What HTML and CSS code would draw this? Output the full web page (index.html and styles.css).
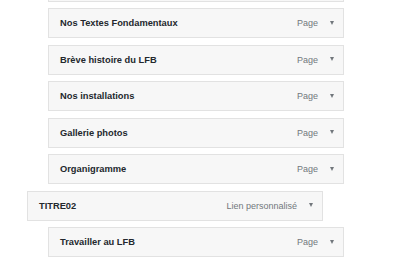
FILE: index.html
```html
<!DOCTYPE html>
<html lang="fr">
<head>
<meta charset="utf-8">
<title>Menu</title>
<link rel="stylesheet" href="styles.css">
</head>
<body>
<ul class="menu">
  <li class="item depth-1"><div class="bar"></div></li>
  <li class="item depth-1"><div class="bar"><span class="title">Nos Textes Fondamentaux</span><span class="meta"><span class="type">Page</span><span class="arrow"></span></span></div></li>
  <li class="item depth-1"><div class="bar"><span class="title">Brève histoire du LFB</span><span class="meta"><span class="type">Page</span><span class="arrow"></span></span></div></li>
  <li class="item depth-1"><div class="bar"><span class="title">Nos installations</span><span class="meta"><span class="type">Page</span><span class="arrow"></span></span></div></li>
  <li class="item depth-1"><div class="bar"><span class="title">Gallerie photos</span><span class="meta"><span class="type">Page</span><span class="arrow"></span></span></div></li>
  <li class="item depth-1"><div class="bar"><span class="title">Organigramme</span><span class="meta"><span class="type">Page</span><span class="arrow"></span></span></div></li>
  <li class="item depth-0"><div class="bar"><span class="title">TITRE02</span><span class="meta"><span class="type">Lien personnalisé</span><span class="arrow"></span></span></div></li>
  <li class="item depth-1"><div class="bar"><span class="title">Travailler au LFB</span><span class="meta"><span class="type">Page</span><span class="arrow"></span></span></div></li>
</ul>
</body>
</html>
```
FILE: styles.css
```css
html, body {
  margin: 0;
  padding: 0;
  background: #ffffff;
  overflow: hidden;
}
body {
  font-family: "Liberation Sans", Arial, sans-serif;
  color: #23282d;
}
.menu {
  list-style: none;
  margin: -28.5px 0 0 0;
  padding: 0 0 0 27px;
  display: flex;
  flex-direction: column;
  gap: 6.5px;
}
.item {
  width: 296px;
}
.depth-1 {
  margin-left: 21px;
}
.bar {
  box-sizing: border-box;
  height: 30px;
  background: #f7f7f7;
  border: 1px solid #e2e2e2;
  display: flex;
  align-items: center;
  justify-content: space-between;
  padding: 0 9px 0 11px;
}
.title {
  font-size: 9.3px;
  font-weight: 700;
  color: #23282d;
}
.meta {
  display: flex;
  align-items: center;
  gap: 12px;
}
.type {
  font-size: 9px;
  color: #72777c;
}
.arrow {
  width: 0;
  height: 0;
  border-left: 2.5px solid transparent;
  border-right: 2.5px solid transparent;
  border-top: 4px solid #72777c;
  margin-top: -1px;
}
```
